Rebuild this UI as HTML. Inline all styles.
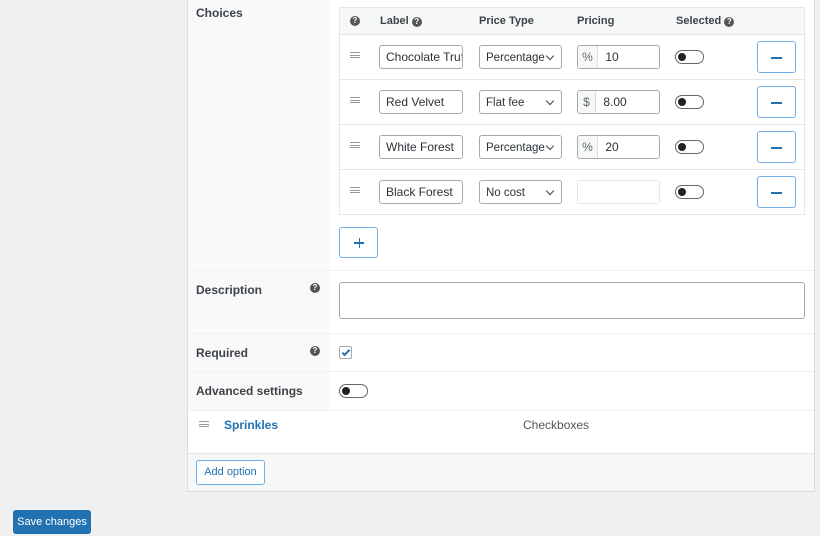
<!DOCTYPE html>
<html><head><meta charset="utf-8"><style>
*{box-sizing:border-box;margin:0;padding:0}
body{width:820px;height:536px;background:#f0f0f1;font-family:"Liberation Sans",sans-serif;font-size:12px;color:#3c434a;position:relative;overflow:hidden}
.a{position:absolute}
.lbl{font-weight:bold;font-size:12px;color:#3c434a}
.help{width:10px;height:10px;border-radius:50%;background:#555;color:#fff;font-size:8px;font-weight:bold;text-align:center;line-height:10px;display:inline-block}
.inp{position:absolute;height:24px;border:1px solid #a7aaad;border-radius:3px;background:#fff;font-size:12px;line-height:22px;padding-left:6px;color:#2c3338;overflow:hidden;white-space:nowrap}
.sel{position:absolute;height:24px;border:1px solid #a7aaad;border-radius:3px;background:#fff;font-size:11.5px;line-height:24px;padding-left:6px;color:#2c3338}
.sel:after{content:"";position:absolute;right:8px;top:7px;width:5px;height:5px;border-right:1.3px solid #3c434a;border-bottom:1.3px solid #3c434a;transform:rotate(45deg)}
.tog{position:absolute;width:29px;height:14px;border:1px solid #666;border-radius:8px;background:#fff}
.tog:before{content:"";position:absolute;left:2px;top:2px;width:8px;height:8px;border-radius:50%;background:#1d2327}
.btn{position:absolute;border:1px solid #72aee6;border-radius:3px;background:#fff;color:#2271b1}
.drag{position:absolute;width:10px;height:6px;border-top:1px solid #999;border-bottom:1px solid #999}
.drag:after{content:"";position:absolute;left:0;top:2px;width:10px;height:1px;background:#999}
.line{position:absolute;background:#e6e6e6;height:1px}
</style></head><body>
<div class="a" style="left:187px;top:0;width:628px;height:492px;background:#fff;border-left:1px solid #dcdcde;border-right:1px solid #dcdcde;border-bottom:1px solid #dcdcde"></div>
<div class="a" style="left:188px;top:0;width:141px;height:410px;background:#f9f9f9"></div>
<div class="line" style="left:188px;top:270px;width:626px;background:#f0f0f1"></div>
<div class="line" style="left:188px;top:333px;width:626px;background:#f0f0f1"></div>
<div class="line" style="left:188px;top:371px;width:626px;background:#f0f0f1"></div>
<div class="line" style="left:188px;top:410px;width:626px;background:#f0f0f1"></div>
<div class="a" style="left:188px;top:453px;width:626px;height:38px;background:#f6f7f7;border-top:1px solid #e6e6e6"></div>

<div class="a lbl" style="left:196px;top:6px">Choices</div>
<div class="a lbl" style="left:196px;top:283px">Description</div>
<div class="a help" style="left:310px;top:283px">?</div>
<div class="a lbl" style="left:196px;top:346px">Required</div>
<div class="a help" style="left:310px;top:346px">?</div>
<div class="a lbl" style="left:196px;top:384px">Advanced settings</div>

<div class="a" style="left:339px;top:7px;width:466px;height:208px;border:1px solid #e6e6e6;background:#fff"></div>
<div class="a" style="left:340px;top:8px;width:464px;height:27px;background:#f6f7f7;border-bottom:1px solid #e6e6e6"></div>
<div class="a help" style="left:350px;top:16px">?</div>
<div class="a lbl" style="left:380px;top:15px;font-size:11px">Label <span class="help">?</span></div>
<div class="a lbl" style="left:479px;top:15px;font-size:11px">Price Type</div>
<div class="a lbl" style="left:577px;top:15px;font-size:11px">Pricing</div>
<div class="a lbl" style="left:676px;top:15px;font-size:11px">Selected <span class="help">?</span></div>
<div class="line" style="left:340px;top:79px;width:464px"></div>
<div class="line" style="left:340px;top:124px;width:464px"></div>
<div class="line" style="left:340px;top:169px;width:464px"></div>

<div class="drag" style="left:350px;top:52px"></div>
<div class="inp" style="left:379px;top:45px;width:84px">Chocolate Truf</div>
<div class="sel" style="left:479px;top:45px;width:83px">Percentage</div>
<div class="inp" style="left:577px;top:45px;width:83px;padding-left:0"><span style="display:inline-block;width:20px;text-align:center;background:#f6f7f7;border-right:1px solid #dcdcde;color:#646970">%</span> <span style="padding-left:4px">10</span></div>
<div class="tog" style="left:675px;top:50px"></div>
<div class="btn" style="left:757px;top:41px;width:39px;height:32px"><div class="a" style="left:13px;top:15px;width:11px;height:2px;background:#2271b1"></div></div>

<div class="drag" style="left:350px;top:97px"></div>
<div class="inp" style="left:379px;top:90px;width:84px">Red Velvet</div>
<div class="sel" style="left:479px;top:90px;width:83px">Flat fee</div>
<div class="inp" style="left:577px;top:90px;width:83px;padding-left:0"><span style="display:inline-block;width:18px;text-align:center;background:#f6f7f7;border-right:1px solid #dcdcde;color:#646970">$</span> <span style="padding-left:4px">8.00</span></div>
<div class="tog" style="left:675px;top:95px"></div>
<div class="btn" style="left:757px;top:86px;width:39px;height:32px"><div class="a" style="left:13px;top:15px;width:11px;height:2px;background:#2271b1"></div></div>

<div class="drag" style="left:350px;top:142px"></div>
<div class="inp" style="left:379px;top:135px;width:84px">White Forest</div>
<div class="sel" style="left:479px;top:135px;width:83px">Percentage</div>
<div class="inp" style="left:577px;top:135px;width:83px;padding-left:0"><span style="display:inline-block;width:20px;text-align:center;background:#f6f7f7;border-right:1px solid #dcdcde;color:#646970">%</span> <span style="padding-left:4px">20</span></div>
<div class="tog" style="left:675px;top:140px"></div>
<div class="btn" style="left:757px;top:131px;width:39px;height:32px"><div class="a" style="left:13px;top:15px;width:11px;height:2px;background:#2271b1"></div></div>

<div class="drag" style="left:350px;top:187px"></div>
<div class="inp" style="left:379px;top:180px;width:84px">Black Forest</div>
<div class="sel" style="left:479px;top:180px;width:83px">No cost</div>
<div class="inp" style="left:577px;top:180px;width:83px;border-color:#e6e6e6"></div>
<div class="tog" style="left:675px;top:185px"></div>
<div class="btn" style="left:757px;top:176px;width:39px;height:32px"><div class="a" style="left:13px;top:15px;width:11px;height:2px;background:#2271b1"></div></div>

<div class="btn" style="left:339px;top:227px;width:39px;height:31px"><div class="a" style="left:14px;top:14px;width:10px;height:1.5px;background:#2271b1"></div><div class="a" style="left:18.5px;top:9.5px;width:1.5px;height:10px;background:#2271b1"></div></div>

<div class="a" style="left:339px;top:282px;width:466px;height:37px;border:1px solid #a7aaad;border-radius:3px;background:#fff"></div>

<div class="a" style="left:339px;top:346px;width:13px;height:13px;border:1px solid #a7aaad;border-radius:2px;background:#fff"><div class="a" style="left:3.5px;top:0.5px;width:4px;height:8px;border-right:2px solid #2271b1;border-bottom:2px solid #2271b1;transform:rotate(45deg)"></div></div>
<div class="tog" style="left:339px;top:384px"></div>

<div class="drag" style="left:199px;top:421px"></div>
<div class="a" style="left:224px;top:418px;color:#2271b1;font-size:12px;font-weight:bold">Sprinkles</div>
<div class="a" style="left:523px;top:418px;color:#50575e;font-size:12px">Checkboxes</div>

<div class="btn" style="left:196px;top:460px;width:69px;height:25px;font-size:11px;text-align:center;line-height:23px">Add option</div>

<div class="a" style="left:13px;top:510px;width:78px;height:24px;background:#2271b1;border-radius:3px;color:#fff;font-size:11px;text-align:center;line-height:24px">Save changes</div>
</body></html>
